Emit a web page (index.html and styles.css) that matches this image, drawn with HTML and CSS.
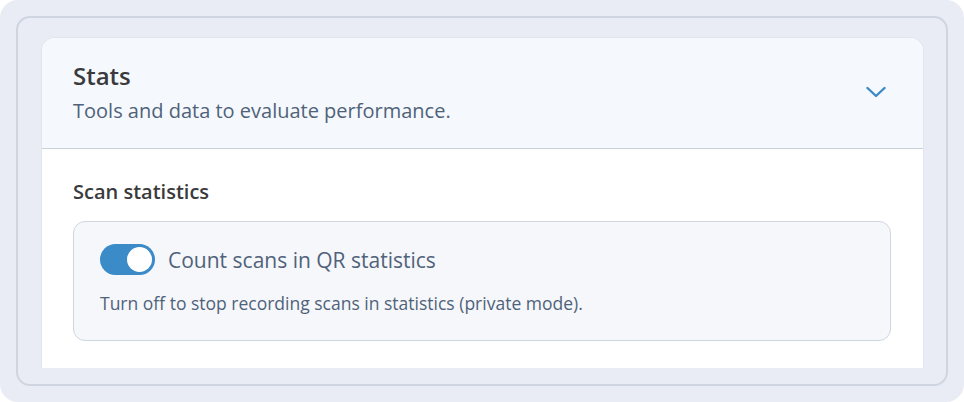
FILE: index.html
```html
<!doctype html>
<html lang="en">
    <head>
        <meta charset="UTF-8" />
        <meta name="viewport" content="width=device-width, initial-scale=1.0" />
        <title>Settings | Stats</title>
        <link rel="stylesheet" href="styles.css">
    </head>
    <body>
        <div class="shell">
            <div class="frame">
                <div class="viewport">
                    <section class="card">
                        <header class="card-head">
                            <div class="head-text">
                                <h2 class="title">Stats</h2>
                                <p class="subtitle">Tools and data to evaluate performance.</p>
                            </div>
                            <button class="chevron" aria-label="Collapse">
                                <svg viewBox="0 0 20 20" fill="none" stroke="currentColor" stroke-width="2.4" stroke-linecap="round" stroke-linejoin="round">
                                    <path d="M1.5 6 10 14l8.5-8" />
                                </svg>
                            </button>
                        </header>
                        <div class="card-body">
                            <h3 class="group-title">Scan statistics</h3>
                            <div class="option">
                                <label class="option-row">
                                    <span class="toggle on"><span class="knob"></span></span>
                                    <span class="option-label">Count scans in QR statistics</span>
                                </label>
                                <p class="option-hint">Turn off to stop recording scans in statistics (private mode).</p>
                            </div>
                        </div>
                    </section>
                </div>
            </div>
        </div>
    </body>
</html>
```

FILE: styles.css
```css
html,
body {
    margin: 0;
    padding: 0;
    background: #fff;
    font-family: "Open Sans", "Noto Sans", sans-serif;
}

.shell {
    box-sizing: border-box;
    height: 402px;
    padding: 16px;
    background-color: #e9ecf4;
    border-radius: 18px;
}

.frame {
    box-sizing: border-box;
    height: 370px;
    padding: 19px 22px 16px 23px;
    border: 2px solid #cfd5e0;
    border-radius: 14px;
}

.viewport {
    height: 331px;
    overflow: hidden;
}

.card {
    background-color: #fff;
    border-radius: 14px 14px 0 0;
    border: 1px solid #e1e6ee;
    border-bottom: none;
    min-height: 420px;
    overflow: hidden;
}

.card-head {
    display: flex;
    align-items: center;
    justify-content: space-between;
    height: 111px;
    box-sizing: border-box;
    padding: 0 36px 0 31px;
    background-color: #f5f9fd;
    border-bottom: 1px solid #c9d2dd;
}

.title {
    margin: 0;
    font-size: 24px;
    font-weight: 600;
    color: #3a3a3c;
    line-height: 30px;
}

.subtitle {
    margin: 6px 0 0;
    font-size: 20px;
    color: #50627a;
    line-height: 28px;
}

.chevron {
    display: flex;
    align-items: center;
    justify-content: center;
    width: 22px;
    height: 22px;
    padding: 0;
    margin-top: -3px;
    border: none;
    background: transparent;
    color: #3a8ac7;
}

.chevron svg {
    width: 20px;
    height: 20px;
}

.card-body {
    padding: 29px 32px 0 31px;
}

.group-title {
    margin: 0 0 15px;
    font-size: 20px;
    font-weight: 600;
    color: #3a3a3c;
    line-height: 28px;
}

.option {
    background-color: #f5f7fa;
    border: 1px solid #cfd6e0;
    border-radius: 12px;
    padding: 22px 26px 25px;
}

.option-row {
    display: flex;
    align-items: center;
    gap: 13px;
}

.toggle {
    position: relative;
    width: 55px;
    height: 31px;
    border-radius: 16px;
    background-color: #3b8bc8;
    flex-shrink: 0;
}

.toggle .knob {
    position: absolute;
    top: 3px;
    right: 3px;
    width: 25px;
    height: 25px;
    border-radius: 50%;
    background: #fff;
}

.option-label {
    font-size: 21px;
    color: #50627a;
    line-height: 28px;
}

.option-hint {
    margin: 16px 0 0;
    font-size: 17.5px;
    color: #50627a;
    line-height: 24px;
}
```
